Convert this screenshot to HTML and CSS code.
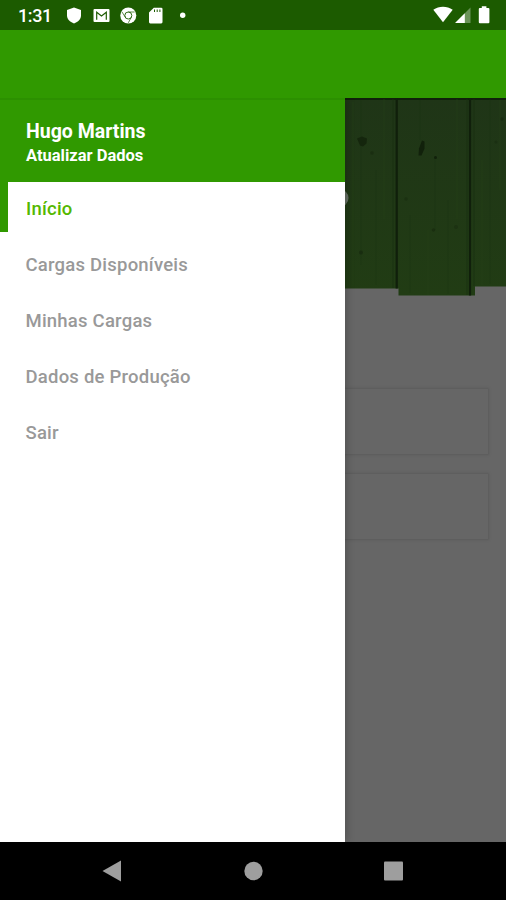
FILE: index.html
```html
<!DOCTYPE html>
<html lang="pt-BR">
<head>
    <meta charset="UTF-8">
    <meta name="viewport" content="width=device-width, initial-scale=1.0">
    <title>Início</title>
    <link rel="stylesheet" href="styles.css">
</head>
<body>
    <header class="status-bar">
        <span class="clock">1:31</span>
        <svg class="notifications" width="124" height="30" viewBox="66 0 124 30" fill="#fff">
            <path d="M74 7.4l7 2.6v5.5c0 3.600-2.800 6.300-7 7.900-4.200-1.600-7-4.300-7-7.900V10z"/>
            <rect x="93.500" y="9" width="16" height="13" rx="1"/>
            <path d="M96.700 19.700V12.300l4.800 3.700 4.800-3.700v7.400" fill="none" stroke="#1c5b00" stroke-width="1.200"/>
            <circle cx="128.300" cy="15.500" r="8"/>
            <circle cx="128.300" cy="15.500" r="3.500" fill="none" stroke="#1c5b00" stroke-width=".9"/>
            <path d="M128.300 12h6.300M125.300 17.200l-3.400-5.400M131.300 17.300l-3 5.500" fill="none" stroke="#1c5b00" stroke-width=".7"/>
            <path d="M153.800 7.800h7.400a1.300 1.300 0 0 1 1.300 1.300v13a1.300 1.300 0 0 1-1.300 1.300h-10.900a1.300 1.300 0 0 1-1.300-1.300v-9.600z"/>
            <path d="M154.500 9.500v2.500M157.200 9.500v2.500M159.900 9.500v2.500" stroke="#1c5b00" stroke-width="1"/>
            <circle cx="182.700" cy="15.300" r="2.700"/>
        </svg>
        <svg class="system" width="60" height="30" viewBox="432 0 60 30" fill="#fff">
            <path d="M433.300 9.800c5.800-4 13.600-4 19.400 0L443 22.300z"/>
            <path d="M470.500 7.500v15.400h-15.400z" fill-opacity=".35"/>
            <path d="M464.800 13.200v9.700h-9.700z"/>
            <path d="M481.800 6.300h4.600v1.800h2a1 1 0 0 1 1 1v13.200a1 1 0 0 1-1 1h-8.600a1 1 0 0 1-1-1V9.100a1 1 0 0 1 1-1h2z"/>
        </svg>
    </header>

    <div class="app-bar"></div>

    <div class="screen">
        <main class="content">
            <!-- wooden planks banner -->
            <svg class="banner" width="506" height="198" viewBox="0 98 506 198">
                <defs>
                    <linearGradient id="wood" x1="0" y1="0" x2="0" y2="1">
                        <stop offset="0" stop-color="#1f3517"/>
                        <stop offset="1" stop-color="#213c14"/>
                    </linearGradient>
                </defs>
                <path d="M0 98h506v188.500h-31v9h-76.500v-7H0z" fill="url(#wood)"/>
                <path d="M345 99h161" stroke="#0c1a08" stroke-width="1.600"/>
                <path d="M396.700 98v190.500M470 98v197.500" stroke="#101f0b" stroke-width="2.200"/>
                <path d="M393 99v189M467 99v196M474 99v187" stroke="#1a3012" stroke-width="1.200" opacity=".6"/>
                <path d="M361 100v165M376 170v115M435 156v74M420 100v40M448 200v94M490 99v185M410 215v78" stroke="#1b3312" stroke-width="1" opacity=".35"/>
                <path d="M353 102v184M384 99v120M428 230v65M457 99v120M482 160v125M500 100v90" stroke="#264119" stroke-width="1.500" opacity=".35"/>
                <g fill="#11210b">
                    <path d="M357 138.500l5-2 5 2-.5 5-3.500 3-3-1z" opacity=".75"/>
                    <path d="M422 140.500l2.500 1v7l-3 7h-3l.5-7z"/>
                    <circle cx="435.500" cy="157.500" r="1.500"/>
                    <circle cx="372" cy="153" r="1.800" opacity=".4"/>
                    <circle cx="361" cy="252.500" r="2" opacity=".5"/>
                    <circle cx="433.500" cy="230" r="1.700" opacity=".4"/>
                    <circle cx="406" cy="199" r="1.700" opacity=".3"/>
                    <circle cx="456" cy="227" r="2" opacity=".25"/>
                    <circle cx="496" cy="142" r="1.500" opacity=".3"/>
                    <circle cx="502" cy="119" r="1.700" opacity=".4"/>
                </g>
                <circle cx="339.500" cy="198" r="9" fill="#667064"/>
            </svg>
            <div class="cards">
                <div class="card"></div>
                <div class="card"></div>
            </div>
        </main>

        <aside class="drawer">
            <div class="profile">
                <div class="name">Hugo Martins</div>
                <div class="update">Atualizar Dados</div>
            </div>
            <nav class="menu">
                <a class="item active">Início</a>
                <a class="item">Cargas Disponíveis</a>
                <a class="item">Minhas Cargas</a>
                <a class="item">Dados de Produção</a>
                <a class="item">Sair</a>
            </nav>
        </aside>
    </div>

    <footer class="nav-bar">
        <svg width="20" height="22" viewBox="0 0 20 22"><path d="M.5 11L19 .5v21z"/></svg>
        <svg width="20" height="20" viewBox="0 0 20 20"><circle cx="10.500" cy="10" r="9.200"/></svg>
        <svg width="20" height="20" viewBox="0 0 20 20"><rect x="0" y=".5" width="19" height="19" rx="1"/></svg>
    </footer>
</body>
</html>
```
FILE: styles.css
```css
* {
    box-sizing: border-box;
}

body {
    margin: 0;
    height: 900px;
    display: flex;
    flex-direction: column;
    overflow: hidden;
    background: #000;
    font-family: Roboto, "Liberation Sans", sans-serif;
}

.status-bar {
    height: 30px;
    display: flex;
    align-items: center;
    padding: 0 14px 0 18px;
    background: #1c5b00;
    color: #fff;
}

.clock {
    width: 48px;
    font-size: 18px;
    font-weight: 500;
    line-height: 30px;
    letter-spacing: -0.4px;
    padding-top: 2px;
}

.system {
    margin-left: auto;
}

.app-bar {
    height: 68px;
    background: #309900;
}

.screen {
    position: relative;
    height: 744px;
}

.content {
    height: 100%;
    background: #666;
}

.banner {
    display: block;
}

.cards {
    display: flex;
    flex-direction: column;
    gap: 20px;
    padding: 93px 18px 0;
}

.card {
    height: 65px;
    background: #666;
    box-shadow: 0 0 2px 1px #5b5b5b;
}

.drawer {
    position: absolute;
    top: 0;
    left: 0;
    width: 345px;
    height: 100%;
    background: #fff;
    box-shadow: 2px 0 8px rgba(0, 0, 0, 0.2);
    clip-path: inset(0 -14px 0 0);
}

.profile {
    height: 84px;
    padding: 20px 26px 0;
    background: #309900;
    border-top: 2px solid #2c9000;
    color: #fff;
    font-weight: 700;
}

.name {
    font-size: 19.5px;
    line-height: 24px;
}

.update {
    font-size: 16.5px;
    line-height: 24px;
}

.menu {
    display: flex;
    flex-direction: column;
}

.item {
    height: 56px;
    padding-left: 25.5px;
    color: #999;
    font-size: 18.5px;
    font-weight: 500;
    letter-spacing: 0.22px;
    line-height: 56px;
}

.item.active {
    height: 50px;
    margin-bottom: 5px;
    padding-left: 18px;
    border-left: 8px solid #309900;
    color: #55b800;
    line-height: 54px;
}

.nav-bar {
    height: 58px;
    display: flex;
    align-items: center;
    justify-content: space-between;
    padding: 0 102px;
    background: #000;
    fill: #9e9e9e;
}
```
